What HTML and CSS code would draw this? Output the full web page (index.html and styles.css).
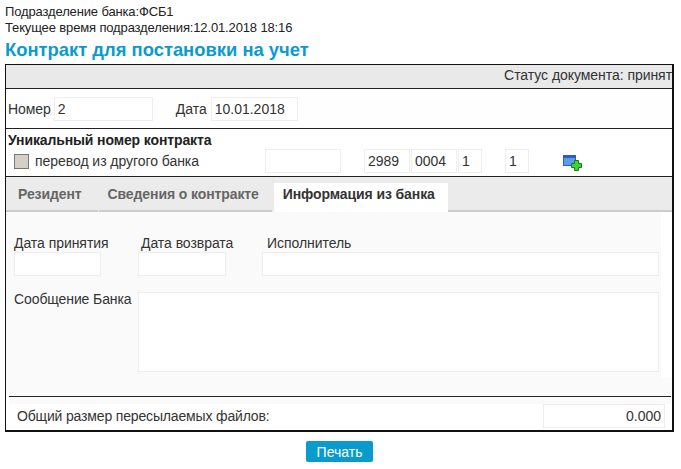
FILE: index.html
```html
<!DOCTYPE html>
<html lang="ru">
<head>
<meta charset="utf-8">
<title>Контракт для постановки на учет</title>
<link rel="stylesheet" href="styles.css">
</head>
<body>
<div class="info">Подразделение банка:ФСБ1</div>
<div class="info">Текущее время подразделения:12.01.2018 18:16</div>
<h1 class="title">Контракт для постановки на учет</h1>
<div class="box">
  <div class="status">Статус документа: принят</div>
  <div class="num-row">
    <label class="lbl-num">Номер</label>
    <input class="field w-num" value="2">
    <label class="lbl-date">Дата</label>
    <input class="field w-date" value="10.01.2018">
  </div>
  <div class="unique">
    <div class="unique-title">Уникальный номер контракта</div>
    <div class="unique-row">
      <span class="check"></span>
      <span class="check-label">перевод из другого банка</span>
      <input class="field w-a">
      <input class="field w-b" value="2989">
      <input class="field w-b" value="0004">
      <input class="field w-c" value="1">
      <input class="field w-c gap-c" value="1">
      <svg class="add-icon" width="20" height="17" viewBox="0 0 20 17">
        <rect x="0" y="1" width="13" height="11" fill="#2a5fc0"/>
        <rect x="1" y="4" width="11" height="7" fill="#5b9cec"/>
        <path d="M11.500 6.500h4v3h3v4h-3v3h-4v-3h-3v-4h3z" fill="#3fd03a" stroke="#1f7a1a" stroke-width="1"/>
      </svg>
    </div>
  </div>
  <div class="tabs">
    <div class="tab first">Резидент</div>
    <div class="tab second">Сведения о контракте</div>
    <div class="tab active">Информация из банка</div>
    <div class="tab-rest"></div>
  </div>
  <div class="panel">
    <div class="panel-main">
      <div class="fields">
        <div class="col c1"><label>Дата принятия</label><input class="field fill"></div>
        <div class="col c2"><label>Дата возврата</label><input class="field fill"></div>
        <div class="col c3"><label>Исполнитель</label><input class="field fill"></div>
      </div>
      <div class="message">
        <label class="msg-label">Сообщение Банка</label>
        <textarea class="msg-area"></textarea>
      </div>
    </div>
    <div class="panel-foot"></div>
  </div>
  <div class="total">
    <span class="total-label">Общий размер пересылаемых файлов:</span>
    <input class="field w-total" value="0.000">
  </div>
</div>
<div class="actions"><button class="print">Печать</button></div>
</body>
</html>
```
FILE: styles.css
```css
* { box-sizing: border-box; }
html, body { margin: 0; padding: 0; }
body {
  background: #fff;
  color: #333;
  font: 14px/16px "Liberation Sans", Arial, sans-serif;
  letter-spacing: -0.05px;
  padding: 4px 7px 0 5px;
  height: 469px;
  overflow: hidden;
}
.info { color: #222; font-size: 13px; line-height: 16px; letter-spacing: -0.14px; }
.title {
  margin: 4px 0;
  color: #0b9ad0;
  font-size: 18.4px;
  line-height: 20px;
  font-weight: bold;
  letter-spacing: 0;
}
.box {
  border: 1px solid #111;
  border-right-width: 2px;
  border-bottom-width: 2px;
  width: 669px;
  height: 368px;
  display: flex;
  flex-direction: column;
}
.status {
  height: 24px;
  background: #e9e9e9;
  border-bottom: 1px solid #222;
  text-align: right;
  padding: 2px 0 0 0;
  line-height: 16px;
}
.field {
  height: 24px;
  margin: 0;
  border: 1px solid #eee;
  background: #fff;
  color: #333;
  font: 14px "Liberation Sans", Arial, sans-serif;
  padding: 0 3px;
  outline: none;
  border-radius: 0;
}
.num-row {
  height: 40px;
  background: #fefefe;
  border-bottom: 1px solid #222;
  display: flex;
  align-items: center;
  padding: 0 0 0 2px;
}
.lbl-num { margin-right: 3px; }
.w-num { width: 99px; }
.lbl-date { margin: 0 4px 0 23px; }
.w-date { width: 87px; }
.unique {
  height: 48px;
  border-bottom: 1px solid #222;
  padding: 3px 0 0 2px;
}
.unique-title { font-weight: bold; color: #222; line-height: 16px; letter-spacing: -0.12px; }
.unique-row { display: flex; align-items: center; margin-top: 1px; }
.check {
  width: 15px;
  height: 15px;
  margin-left: 6px;
  background: #d4d0c8;
  border: 1px solid #777;
  flex: none;
}
.check-label { margin-left: 6px; width: 230px; flex: none; }
.w-a { width: 76px; margin-right: 23px; }
.w-b { width: 46px; margin-right: 1px; }
.w-c { width: 24px; }
.gap-c { margin-left: 23px; }
.add-icon { margin: 3px 0 0 34px; }
.tabs {
  height: 35px;
  background: #ebebeb;
  display: flex;
  align-items: flex-end;
}
.tab {
  font-weight: bold;
  color: #666;
  line-height: 22px;
  height: 29px;
  letter-spacing: -0.1px;
  border-bottom: 2px solid #ccc;
}
.first { padding: 0 16px 0 12px; margin-right: 1px; }
.second { padding: 0 13px 0 9px; margin-right: 2px; }
.tab.active {
  background: #fff;
  color: #333;
  padding: 0 13px 0 9px;
  border-bottom: 0;
}
.tab-rest { flex: 1; height: 29px; border-bottom: 2px solid #ccc; }
.panel { height: 184px; background: #fff; }
.panel-main {
  height: 166px;
  margin-right: 11px;
  background: #fafafa;
  padding: 23px 2px 0 8px;
}
.panel-foot { height: 18px; background: #fafafa; }
.fields { display: flex; }
.col { display: flex; flex-direction: column; }
.col label { line-height: 17px; white-space: nowrap; }
.fill { width: 100%; }
.c1 { width: 87px; margin-right: 37px; }
.c2 { width: 88px; margin-right: 36px; }
.c2 label { padding-left: 3px; }
.c3 { flex: 1; }
.c3 label { padding-left: 5px; }
.message { display: flex; margin-top: 16px; }
.msg-label { width: 124px; line-height: 14px; flex: none; white-space: nowrap; letter-spacing: -0.1px; }
.msg-area {
  flex: 1;
  height: 80px;
  border: 1px solid #eee;
  background: #fff;
  resize: none;
  outline: none;
  margin: 0;
}
.total {
  margin: 0 1px 0 3px;
  border-top: 1px solid #222;
  flex: 1;
  display: flex;
  align-items: flex-start;
  justify-content: space-between;
  padding: 7px 6px 0 8px;
  color: #333;
  background: linear-gradient(#fafafa 7px, #fff 7px);
}
.total-label { line-height: 24px; letter-spacing: -0.16px; }
.w-total { width: 122px; text-align: right; }
.actions { display: flex; justify-content: center; margin-top: 9px; width: 669px; }
.print {
  width: 67px;
  height: 21px;
  background: #0a9bcd;
  color: #fff;
  border: 0;
  border-radius: 2px;
  font: 14px "Liberation Sans", Arial, sans-serif;
  padding: 0;
}
```
